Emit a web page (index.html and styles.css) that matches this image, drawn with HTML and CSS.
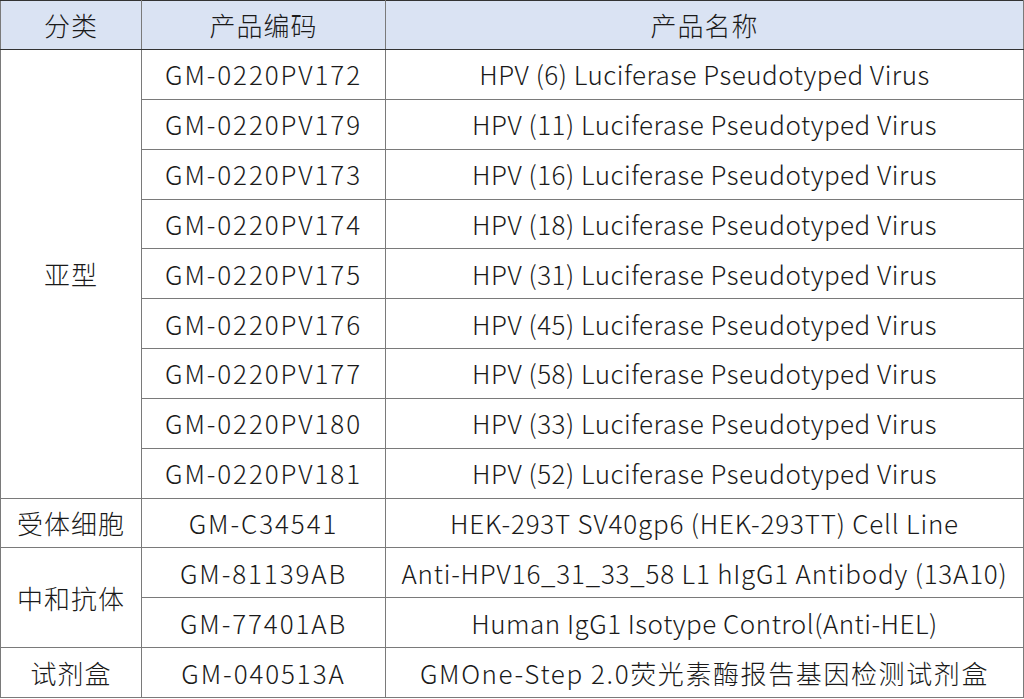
FILE: index.html
```html
<!DOCTYPE html>
<html lang="zh">
<head>
<meta charset="utf-8">
<link rel="stylesheet" href="styles.css">
</head>
<body>
<table class="product-table">
  <colgroup>
    <col class="c1"><col class="c2"><col class="c3">
  </colgroup>
  <thead>
    <tr><th class="cat">分类</th><th class="cat">产品编码</th><th class="cat">产品名称</th></tr>
  </thead>
  <tbody>
    <tr><td class="cat" rowspan="9">亚型</td><td class="code">GM-0220PV172</td><td>HPV (6) Luciferase Pseudotyped Virus</td></tr>
    <tr><td class="code">GM-0220PV179</td><td>HPV (11) Luciferase Pseudotyped Virus</td></tr>
    <tr><td class="code">GM-0220PV173</td><td>HPV (16) Luciferase Pseudotyped Virus</td></tr>
    <tr><td class="code">GM-0220PV174</td><td>HPV (18) Luciferase Pseudotyped Virus</td></tr>
    <tr><td class="code">GM-0220PV175</td><td>HPV (31) Luciferase Pseudotyped Virus</td></tr>
    <tr><td class="code">GM-0220PV176</td><td>HPV (45) Luciferase Pseudotyped Virus</td></tr>
    <tr><td class="code">GM-0220PV177</td><td>HPV (58) Luciferase Pseudotyped Virus</td></tr>
    <tr><td class="code">GM-0220PV180</td><td>HPV (33) Luciferase Pseudotyped Virus</td></tr>
    <tr><td class="code">GM-0220PV181</td><td>HPV (52) Luciferase Pseudotyped Virus</td></tr>
    <tr><td class="cat">受体细胞</td><td class="code">GM-C34541</td><td class="hek">HEK-293T SV40gp6 (HEK-293TT) Cell Line</td></tr>
    <tr><td class="cat" rowspan="2">中和抗体</td><td class="code">GM-81139AB</td><td class="anti">Anti-HPV16_31_33_58 L1 hIgG1 Antibody (13A10)</td></tr>
    <tr><td class="code">GM-77401AB</td><td>Human IgG1 Isotype Control(Anti-HEL)</td></tr>
    <tr><td class="cat">试剂盒</td><td class="code">GM-040513A</td><td class="kit">GMOne-Step 2.0荧光素酶报告基因检测试剂盒</td></tr>
  </tbody>
</table>
</body>
</html>
```

FILE: styles.css
```css
html, body {
  margin: 0;
  padding: 0;
  background: #ffffff;
}
.product-table {
  width: 1023px;
  table-layout: fixed;
  border-collapse: collapse;
  font-family: "Noto Sans CJK SC", "Noto Sans", sans-serif;
  font-size: 26px;
  font-weight: 300;
  color: #1a1a1a;
}
.c1 { width: 141px; }
.c2 { width: 244px; }
.c3 { width: 638px; }
.product-table th,
.product-table td {
  border: 1.5px solid #7a7a7a;
  text-align: center;
  vertical-align: middle;
  padding: 0;
  line-height: 1;
  font-weight: 300;
  white-space: nowrap;
  letter-spacing: 0.5px;
}
.product-table thead th {
  background: #dae3f3;
  height: 48px;
  border-top: 1.5px solid #333;
  border-bottom: 1.5px solid #333;
}
.product-table tbody td {
  height: 48.85px;
}
.product-table .cat {
  letter-spacing: 1px;
}
.product-table .code {
  letter-spacing: 1.9px;
}
.product-table .hek {
  letter-spacing: 0.8px;
}
.product-table .anti {
  letter-spacing: 0.8px;
}
.product-table .kit {
  letter-spacing: 1.6px;
}
```
